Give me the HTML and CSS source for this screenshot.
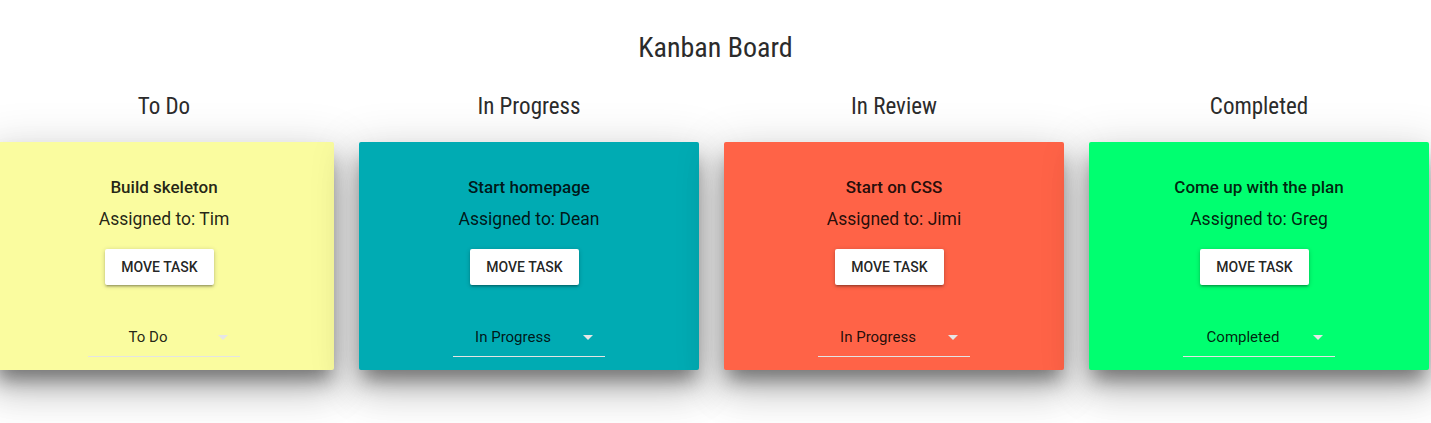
FILE: index.html
```html
<!DOCTYPE html>
<html>
<head>
<meta charset="utf-8">
<link rel="stylesheet" href="styles.css">
</head>
<body>
<div class="page">
  <h1 class="title">Kanban Board</h1>
  <div class="board">
    <div class="column">
      <h2 class="col-title">To Do</h2>
      <div class="card yellow">
        <div class="task">Build skeleton</div>
        <div class="assignee">Assigned to: Tim</div>
        <button class="btn">Move Task</button>
        <div class="select"><span class="select-text">To Do</span><svg class="arrow" viewBox="0 0 24 24" width="24" height="24"><path d="M7 10l5 5 5-5z"/></svg></div>
      </div>
    </div>
    <div class="column">
      <h2 class="col-title">In Progress</h2>
      <div class="card teal">
        <div class="task">Start homepage</div>
        <div class="assignee">Assigned to: Dean</div>
        <button class="btn">Move Task</button>
        <div class="select"><span class="select-text">In Progress</span><svg class="arrow" viewBox="0 0 24 24" width="24" height="24"><path d="M7 10l5 5 5-5z"/></svg></div>
      </div>
    </div>
    <div class="column">
      <h2 class="col-title">In Review</h2>
      <div class="card tomato">
        <div class="task">Start on CSS</div>
        <div class="assignee">Assigned to: Jimi</div>
        <button class="btn">Move Task</button>
        <div class="select"><span class="select-text">In Progress</span><svg class="arrow" viewBox="0 0 24 24" width="24" height="24"><path d="M7 10l5 5 5-5z"/></svg></div>
      </div>
    </div>
    <div class="column">
      <h2 class="col-title">Completed</h2>
      <div class="card green">
        <div class="task">Come up with the plan</div>
        <div class="assignee">Assigned to: Greg</div>
        <button class="btn">Move Task</button>
        <div class="select"><span class="select-text">Completed</span><svg class="arrow" viewBox="0 0 24 24" width="24" height="24"><path d="M7 10l5 5 5-5z"/></svg></div>
      </div>
    </div>
  </div>
</div>
</body>
</html>
```
FILE: styles.css
```css
html, body {
  margin: 0;
  padding: 0;
  background: #ffffff;
}
.page {
  text-align: center;
  padding-top: 28px;
  min-height: 423px;
  box-sizing: border-box;
}
.title {
  margin: 0;
  font-family: Roboto, "DejaVu Sans", sans-serif;
  font-stretch: 75%;
  font-weight: 400;
  font-size: 28px;
  line-height: 40px;
  color: #2b2b2b;
}
.board {
  display: flex;
  gap: 25px;
  margin-left: -6px;
  margin-top: 24px;
}
.column {
  flex: 0 0 340px;
  width: 340px;
}
.col-title {
  margin: 0;
  font-family: Roboto, "DejaVu Sans", sans-serif;
  font-stretch: 75%;
  font-weight: 400;
  font-size: 23px;
  line-height: 30px;
  color: #2b2b2b;
  height: 50px;
}
.card {
  height: 228px;
  box-sizing: border-box;
  padding-top: 35px;
  border-radius: 2px;
  display: flex;
  flex-direction: column;
  align-items: center;
  font-family: Roboto, "Liberation Sans", sans-serif;
  color: rgba(0,0,0,0.87);
  box-shadow: 0 14px 18px -4px rgba(0,0,0,0.42), 0 22px 38px 3px rgba(0,0,0,0.14), 0 9px 46px 8px rgba(0,0,0,0.12);
}
.yellow { background: #fafc9f; }
.teal { background: #00abb3; }
.tomato { background: #ff6347; }
.green { background: #00ff70; }
.task {
  font-size: 17px;
  font-weight: 500;
  line-height: 20px;
}
.assignee {
  margin-top: 12px;
  font-size: 17.5px;
  line-height: 20px;
}
.btn {
  margin-top: 20px;
  margin-right: 9px;
  height: 36px;
  padding: 0 16px;
  border: 0;
  border-radius: 2px;
  background: #fff;
  font-family: Roboto, "Liberation Sans", sans-serif;
  font-weight: 500;
  font-size: 14px;
  text-transform: uppercase;
  color: rgba(0,0,0,0.87);
  box-shadow: 0 1px 5px rgba(0,0,0,0.2), 0 2px 2px rgba(0,0,0,0.14), 0 3px 1px -2px rgba(0,0,0,0.12);
}
.select {
  position: relative;
  margin-top: 35px;
  width: 152px;
  height: 37px;
  box-sizing: border-box;
  padding-bottom: 2px;
  border-bottom: 1px solid #e4e4e4;
  display: flex;
  align-items: center;
}
.select-text {
  flex: 1;
  padding-right: 32px;
  font-size: 15px;
  line-height: 20px;
  text-align: center;
}
.arrow {
  position: absolute;
  right: 5px;
  top: 5px;
  fill: #e6e6e6;
}
```
